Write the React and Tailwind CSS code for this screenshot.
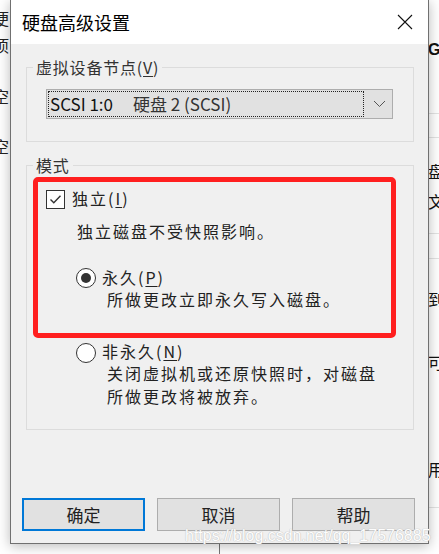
import { useState } from "react";

function CheckBox({ checked }) {
  return (
    <div className="flex h-[19px] w-[19px] shrink-0 items-center justify-center border border-[#333] bg-white">
      {checked && (
        <svg width="15" height="15" viewBox="0 0 15 15">
          <path d="M2.5 7.5 L5.8 10.8 L12.5 3.8" fill="none" stroke="#333" strokeWidth="1.4" />
        </svg>
      )}
    </div>
  );
}

function Radio({ checked }) {
  return (
    <div className="flex h-[20px] w-[20px] shrink-0 items-center justify-center rounded-full border border-[#333] bg-white">
      {checked && <div className="h-[10px] w-[10px] rounded-full bg-[#333]" />}
    </div>
  );
}

function GroupBox({ title, className, children }) {
  return (
    <div className={"relative ml-[15px] w-[388px] border border-[#dcdcdc] " + className}>
      <span className="absolute -top-[11px] left-[6px] bg-[#f0f0f0] px-[3px] text-[16px] leading-[20px] tracking-[0.8px] text-[#333]">
        {title}
      </span>
      {children}
    </div>
  );
}

function Button({ label, primary }) {
  return (
    <button
      className={
        "flex h-[33px] w-[123px] items-center justify-center bg-[#e1e1e1] text-[17px] text-[#222] " +
        (primary ? "border-2 border-[#0078d7]" : "border border-[#adadad]")
      }
    >
      {label}
    </button>
  );
}

export default function App() {
  const [independent, setIndependent] = useState(true);
  const [persistent, setPersistent] = useState(true);

  return (
    <div className="relative h-[554px] w-[439px] overflow-hidden bg-white font-['Noto_Sans_CJK_SC',sans-serif]">
      {/* desktop content behind the dialog */}
      <div className="flex h-full">
        <div className="flex w-[10px] flex-col overflow-hidden text-[16px] leading-[16px] text-[#222]">
          <div className="-ml-[7px] mt-[10px]">便</div>
          <div className="-ml-[7px] mt-[11px]">项</div>
          <div className="-ml-[7px] mt-[35px]">空</div>
          <div className="-ml-[7px] mt-[34px]">空</div>
        </div>
        <div className="flex flex-1 flex-col">
          <div className="flex-1" />
          <div className="ml-[209px] h-[11px] w-px bg-[#777]" />
        </div>
        <div className="flex w-[11px] flex-col overflow-hidden text-[16px] leading-[18px] text-[#111]">
          <div className="h-[41px] shrink-0" />
          <div className="h-[18px] shrink-0 font-['Liberation_Sans',sans-serif] font-bold">GI</div>
          <div className="h-[54px] shrink-0" />
          <div className="h-px shrink-0 bg-[#e3e3e3]" />
          <div className="h-[23px] shrink-0" />
          <div className="h-px shrink-0 bg-[#e3e3e3]" />
          <div className="h-[24px] shrink-0" />
          <div className="h-[18px] shrink-0">盘</div>
          <div className="h-[12px] shrink-0" />
          <div className="h-[18px] shrink-0">文</div>
          <div className="h-[23px] shrink-0" />
          <div className="h-px shrink-0 bg-[#e3e3e3]" />
          <div className="h-[24px] shrink-0" />
          <div className="h-px shrink-0 bg-[#e3e3e3]" />
          <div className="h-[31px] shrink-0" />
          <div className="h-[18px] shrink-0">到</div>
          <div className="h-[45px] shrink-0" />
          <div className="h-[18px] shrink-0">可</div>
          <div className="h-[89px] shrink-0" />
          <div className="h-[18px] shrink-0">用</div>
          <div className="h-[29px] shrink-0" />
          <div className="h-px shrink-0 bg-[#e3e3e3]" />
        </div>
      </div>

      {/* dialog window */}
      <div className="absolute left-[10px] top-0 flex h-[544px] w-[419px] flex-col border border-t-0 border-[#707070] bg-[#f0f0f0] shadow-[0_2px_12px_rgba(0,0,0,0.28)]">
        <div className="flex h-[44px] shrink-0 items-center justify-between bg-white pl-[11px] pr-[15px]">
          <span className="text-[18px] leading-[24px] text-black">硬盘高级设置</span>
          <svg width="16" height="16" viewBox="0 0 16 16">
            <path d="M1 1 L15 15 M15 1 L1 15" stroke="#111" strokeWidth="1.1" />
          </svg>
        </div>

        <GroupBox title={<>虚拟设备节点(<span className="underline underline-offset-2">V</span>)</>} className="mt-[23px] h-[75px]">
          <div className="ml-[19px] mt-[21px] flex h-[30px] w-[347px] items-center border border-[#adadad] bg-[#e1e1e1] p-px">
            <div className="flex h-[26px] w-[316px] items-center border border-dotted border-[#222] pl-[1px] text-[17px] leading-[22px] text-[#111]">
              <span>SCSI 1:0</span>
              <span className="ml-[20px] text-[#333]">硬盘 2 (SCSI)</span>
            </div>
            <svg className="ml-[9px]" width="13" height="8" viewBox="0 0 13 8">
              <path d="M1 1 L6.5 6.5 L12 1" fill="none" stroke="#555" strokeWidth="1" />
            </svg>
          </div>
        </GroupBox>

        <GroupBox title="模式" className="mt-[23px] h-[265px]">
          <div className="ml-[6px] mt-[11px] flex h-[161px] w-[363px] flex-col rounded-[5px] border-[5px] border-[#ff1f1f] text-[16px] leading-[22px] tracking-[2px] text-[#222]">
            <div className="ml-[8px] mt-[7px] flex items-center gap-[7px]" onClick={() => setIndependent(!independent)}>
              <CheckBox checked={independent} />
              <span className="-mt-[2px]">独立(<span className="underline underline-offset-2">I</span>)</span>
            </div>
            <div className="ml-[39px] mt-[11px]">独立磁盘不受快照影响。</div>
            <div className="ml-[38px] mt-[26px] flex items-center gap-[6px]" onClick={() => setPersistent(true)}>
              <Radio checked={persistent} />
              <span className="-mt-[2px]">永久(<span className="underline underline-offset-2">P</span>)</span>
            </div>
            <div className="ml-[69px]">所做更改立即永久写入磁盘。</div>
          </div>

          <div className="flex flex-col text-[16px] leading-[23px] tracking-[2px] text-[#222]">
            <div className="ml-[49px] mt-[4px] flex items-center gap-[6px]" onClick={() => setPersistent(false)}>
              <Radio checked={!persistent} />
              <span className="-mt-[2px]">非永久(<span className="underline underline-offset-2">N</span>)</span>
            </div>
            <div className="ml-[80px] -mt-[1px]">关闭虚拟机或还原快照时，对磁盘</div>
            <div className="ml-[80px]">所做更改将被放弃。</div>
          </div>
        </GroupBox>

        <div className="mb-[12px] ml-[11px] mt-auto flex gap-[12px]">
          <Button label="确定" primary />
          <Button label="取消" />
          <Button label="帮助" />
        </div>
      </div>

      {/* watermark */}
      <span className="absolute left-[185px] top-[527px] font-['Liberation_Sans',sans-serif] text-[16px] leading-[18px] text-[#fdfdfd] [text-shadow:0_0_1px_#bdbdbd,0_0_1px_#bdbdbd]">
        https://blog.csdn.net/qq_17576885
      </span>
    </div>
  );
}
